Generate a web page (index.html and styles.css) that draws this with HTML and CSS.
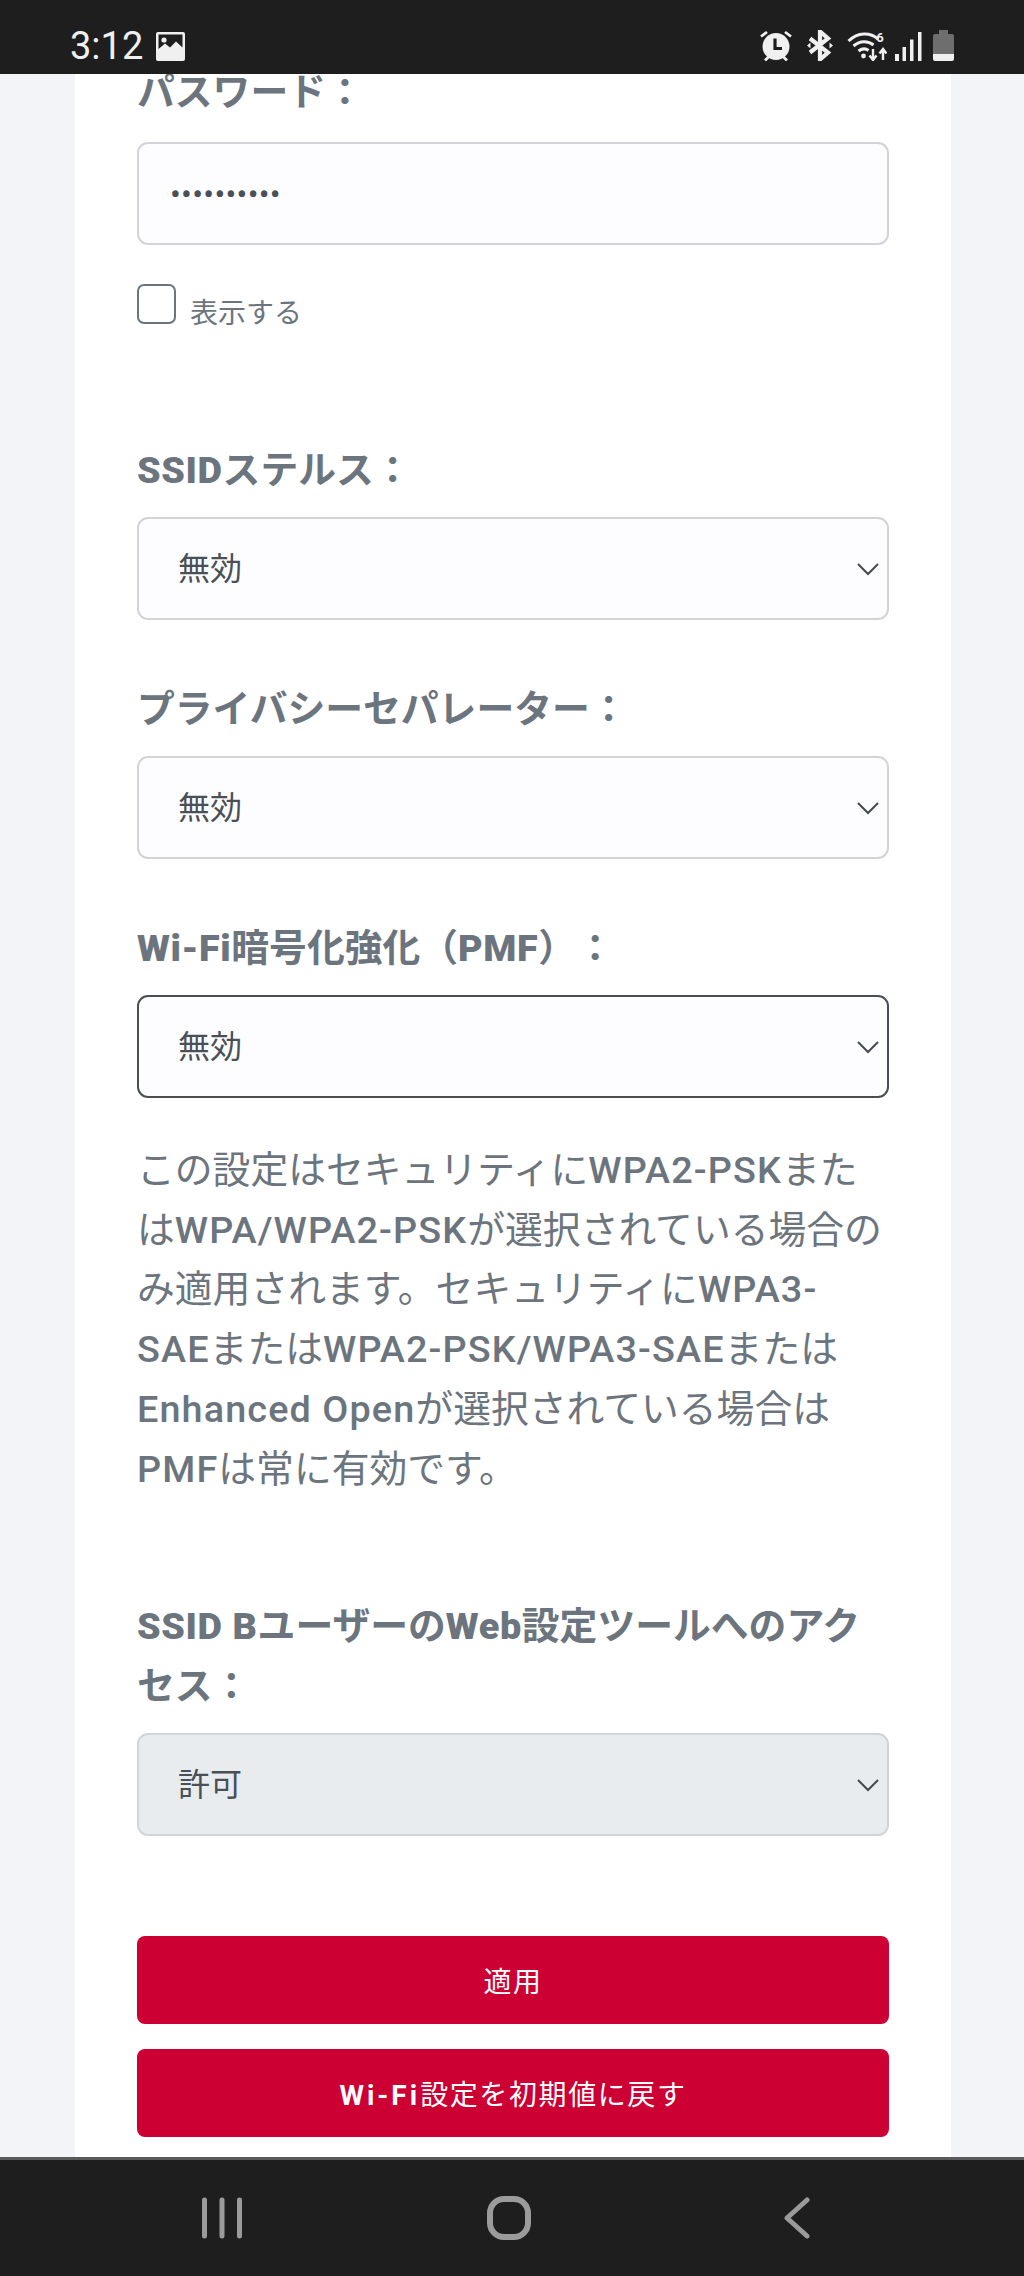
FILE: index.html
```html
<!DOCTYPE html>
<html lang="ja">
<head>
    <meta charset="UTF-8">
    <title>Wi-Fi設定</title>
    <meta name="viewport" content="width=device-width, initial-scale=1.0">
    <link rel="stylesheet" href="styles.css">
</head>
<body>
    <header class="status-bar">
        <div class="status-left">
            <span class="clock">3:12</span>
            <svg class="ic-image" viewBox="0 0 29 29" width="29" height="29">
                <path fill-rule="evenodd" fill="#f0f0f0" d="M2 0H27a2 2 0 0 1 2 2V27a2 2 0 0 1-2 2H2a2 2 0 0 1-2-2V2a2 2 0 0 1 2-2ZM2.500 2.500V17L9 11.500 14 15.500 20 9.500 26.500 15.500V2.500Z"/>
                <circle cx="8" cy="8" r="2.600" fill="#f0f0f0"/>
            </svg>
        </div>
        <div class="status-right">
            <svg viewBox="0 0 32 31" width="32" height="31">
                <circle cx="16" cy="16.500" r="13.500" fill="#f0f0f0"/>
                <path d="M15 8.500V18.500H22" fill="none" stroke="#1e1e1e" stroke-width="3.200"/>
                <path d="M1 6.500 7 2M31 6.500 25 2M5 30.500 8.500 27M27 30.500 23.500 27" fill="none" stroke="#f0f0f0" stroke-width="2.800"/>
            </svg>
            <svg class="ic-bt" viewBox="0 0 28 31" width="28" height="31">
                <path d="M4 8.500 22 22.500 14 29.500V1.500L22 8.500 4 22.500" fill="none" stroke="#f0f0f0" stroke-width="4.200"/>
                <path d="M1 15.500 4.500 12.500V18.500ZM27 15.500 23.500 12.500V18.500Z" fill="#f0f0f0"/>
            </svg>
            <svg class="ic-wifi" viewBox="0 0 40 31" width="40" height="31">
                <path d="M1.500 11C11 2 23 2 31 9M6.500 16C13 10.500 21 10.500 26.500 15M11.500 21C15 18.500 19 18.500 21.500 20.500" fill="none" stroke="#f0f0f0" stroke-width="3"/>
                <circle cx="16.500" cy="26" r="2.400" fill="#f0f0f0"/>
                <text class="wifi-six" x="33" y="12">6</text>
                <path d="M26 19V29M22.500 25.500 26 30 29.500 25.500M36 30V20M32.500 23.500 36 19 39.500 23.500" fill="none" stroke="#f0f0f0" stroke-width="2.400"/>
            </svg>
            <svg class="ic-signal" viewBox="0 0 27 29" width="27" height="29">
                <path d="M0 22H4V29H0ZM7.500 15H11V29H7.500ZM15 7.500H18.500V29H15ZM23 0H26.500V29H23Z" fill="#f0f0f0"/>
            </svg>
            <svg class="ic-battery" viewBox="0 0 21 31" width="21" height="31">
                <path d="M6 0H15V4H19a2 2 0 0 1 2 2V24H0V6a2 2 0 0 1 2-2H6Z" fill="#6e6e6e"/>
                <path d="M0 24H21V29a2 2 0 0 1-2 2H2a2 2 0 0 1-2-2Z" fill="#f0f0f0"/>
            </svg>
        </div>
    </header>

    <main class="page">
        <form class="card">
            <div class="field field-first">
                <label class="field-label" for="password">パスワード：</label>
                <input class="control" type="password" id="password" value="1234567890">
            </div>
            <label class="show-pass">
                <input class="show-check" type="checkbox">
                <span class="show-text">表示する</span>
            </label>

            <div class="field field-stealth">
                <label class="field-label" for="stealth"><b>SSID</b>ステルス：</label>
                <div class="select-wrap">
                    <select class="control select" id="stealth"><option>無効</option></select>
                    <svg class="chevron" viewBox="0 0 22 13" width="22" height="13"><path d="M1 1 11 11 21 1" fill="none" stroke="#454a50" stroke-width="2"/></svg>
                </div>
            </div>

            <div class="field">
                <label class="field-label" for="privacy">プライバシーセパレーター：</label>
                <div class="select-wrap">
                    <select class="control select" id="privacy"><option>無効</option></select>
                    <svg class="chevron" viewBox="0 0 22 13" width="22" height="13"><path d="M1 1 11 11 21 1" fill="none" stroke="#454a50" stroke-width="2"/></svg>
                </div>
            </div>

            <div class="field field-pmf">
                <label class="field-label" for="pmf"><b>Wi-Fi</b>暗号化強化（<b>PMF</b>）：</label>
                <div class="select-wrap">
                    <select class="control select select-focus" id="pmf"><option>無効</option></select>
                    <svg class="chevron" viewBox="0 0 22 13" width="22" height="13"><path d="M1 1 11 11 21 1" fill="none" stroke="#454a50" stroke-width="2"/></svg>
                </div>
            </div>

            <p class="note">この設定はセキュリティに<b>WPA2-PSK</b>または<b>WPA/WPA2-PSK</b>が選択されている場合のみ適用されます。セキュリティに<b>WPA3-SAE</b>または<b>WPA2-PSK/WPA3-SAE</b>または<b>Enhanced Open</b>が選択されている場合は<b>PMF</b>は常に有効です。</p>

            <div class="field field-access">
                <label class="field-label" for="access"><b>SSID B</b>ユーザーの<b>Web</b>設定ツールへのアクセス：</label>
                <div class="select-wrap">
                    <select class="control select select-off" id="access" disabled><option>許可</option></select>
                    <svg class="chevron" viewBox="0 0 22 13" width="22" height="13"><path d="M1 1 11 11 21 1" fill="none" stroke="#454a50" stroke-width="2"/></svg>
                </div>
            </div>

            <button class="btn" type="button">適用</button>
            <button class="btn" type="button"><b>Wi-Fi</b>設定を初期値に戻す</button>
        </form>
    </main>

    <nav class="nav-bar">
        <svg viewBox="0 0 40 42" width="40" height="42">
            <path d="M2.500 3V39M20 3V39M37.500 3V39" fill="none" stroke="#9b9b9b" stroke-width="5" stroke-linecap="round"/>
        </svg>
        <svg class="nav-home" viewBox="0 0 44 44" width="44" height="44">
            <rect x="3" y="3" width="38" height="38" rx="14" fill="none" stroke="#9b9b9b" stroke-width="6"/>
        </svg>
        <svg class="nav-back" viewBox="0 0 26 42" width="26" height="42">
            <path d="M23 3 3 21 23 39" fill="none" stroke="#9b9b9b" stroke-width="5" stroke-linecap="round" stroke-linejoin="round"/>
        </svg>
    </nav>
</body>
</html>
```

FILE: styles.css
```css
* {
    box-sizing: border-box;
}

html,
body {
    height: 100%;
}

body {
    margin: 0;
    display: flex;
    flex-direction: column;
    height: 2276px;
    overflow: hidden;
    font-family: Roboto, "Noto Sans CJK JP", sans-serif;
    text-spacing-trim: space-all;
    background-color: #f3f4f8;
}

/* status bar */
.status-bar {
    flex: 0 0 74px;
    display: flex;
    justify-content: space-between;
    align-items: flex-end;
    padding: 0 70px 13px 70px;
    background-color: #1e1e1e;
}

.status-left {
    display: flex;
    align-items: center;
    gap: 13px;
}

.clock {
    font-size: 38px;
    line-height: 29px;
    color: #f0f0f0;
}

.status-right {
    display: flex;
    align-items: flex-end;
    gap: 14px;
}

.ic-wifi {
    margin-left: -1px;
}

.ic-signal {
    margin-left: -6px;
}

.ic-battery {
    margin-left: -3px;
}

.wifi-six {
    font-size: 13px;
    font-weight: 700;
    fill: #f0f0f0;
    text-anchor: middle;
}

/* page */
.page {
    flex: 1;
    min-height: 0;
    padding: 0 73px 0 75px;
    overflow: hidden;
}

.card {
    display: flow-root;
    height: 100%;
    padding: 0 62px;
    background-color: #fff;
}

.field {
    margin-bottom: 58px;
}

.field-first {
    margin-top: -12px;
    margin-bottom: 39px;
}

.field-first .field-label {
    padding-top: 0;
    margin-bottom: 20px;
}

.field-stealth {
    margin-top: 115px;
}

.field-pmf {
    margin-bottom: 43px;
}

.field-access {
    margin-top: 96px;
    margin-bottom: 100px;
}

.field-label {
    display: block;
    padding-top: 1px;
    margin-bottom: 17px;
    font-size: 37.8px;
    line-height: 60px;
    font-weight: 700;
    color: #6c757d;
}

.field-label b {
    letter-spacing: 0.6px;
}

.control {
    display: block;
    width: 100%;
    height: 103px;
    padding: 0 39px;
    border: 2px solid #d2d4da;
    border-radius: 11px;
    background-color: #fdfdff;
    font-family: inherit;
    font-size: 32px;
    color: #495057;
    outline: none;
}

#password {
    padding: 0 31px;
    letter-spacing: 0.3px;
}

.select-wrap {
    position: relative;
}

.select {
    appearance: none;
    opacity: 1;
}

.select-focus {
    border-color: #4a4f55;
}

.select-off {
    background-color: #e9ecef;
}

.chevron {
    position: absolute;
    top: 46px;
    right: 10px;
    pointer-events: none;
}

.show-pass {
    display: flex;
    align-items: flex-end;
    gap: 14px;
    height: 40px;
    font-size: 28px;
    line-height: 40px;
    color: #6c757d;
}

.show-text {
    margin-bottom: -10px;
}

.show-check {
    appearance: none;
    flex: none;
    width: 39px;
    height: 40px;
    margin: 0;
    border: 2.500px solid #6c757d;
    border-radius: 7px;
    background-color: #fff;
}

.note {
    margin: 0;
    font-size: 37.8px;
    line-height: 59.7px;
    color: #6c757d;
}

.note b {
    font-weight: 500;
    letter-spacing: 1.1px;
}

.btn {
    display: block;
    width: 100%;
    height: 88px;
    margin-bottom: 25px;
    padding: 0;
    border: 0;
    border-radius: 8px;
    background-color: #cc0033;
    font-family: inherit;
    font-size: 28px;
    letter-spacing: 1.6px;
    color: #fff;
}

.btn b {
    letter-spacing: 3px;
}

/* nav bar */
.nav-bar {
    flex: 0 0 119px;
    display: flex;
    align-items: center;
    padding-left: 202px;
    border-top: 3px solid #5a5a5a;
    background-color: #1e1e1e;
}

.nav-home {
    margin-left: 245px;
}

.nav-back {
    margin-left: 253px;
}
```
